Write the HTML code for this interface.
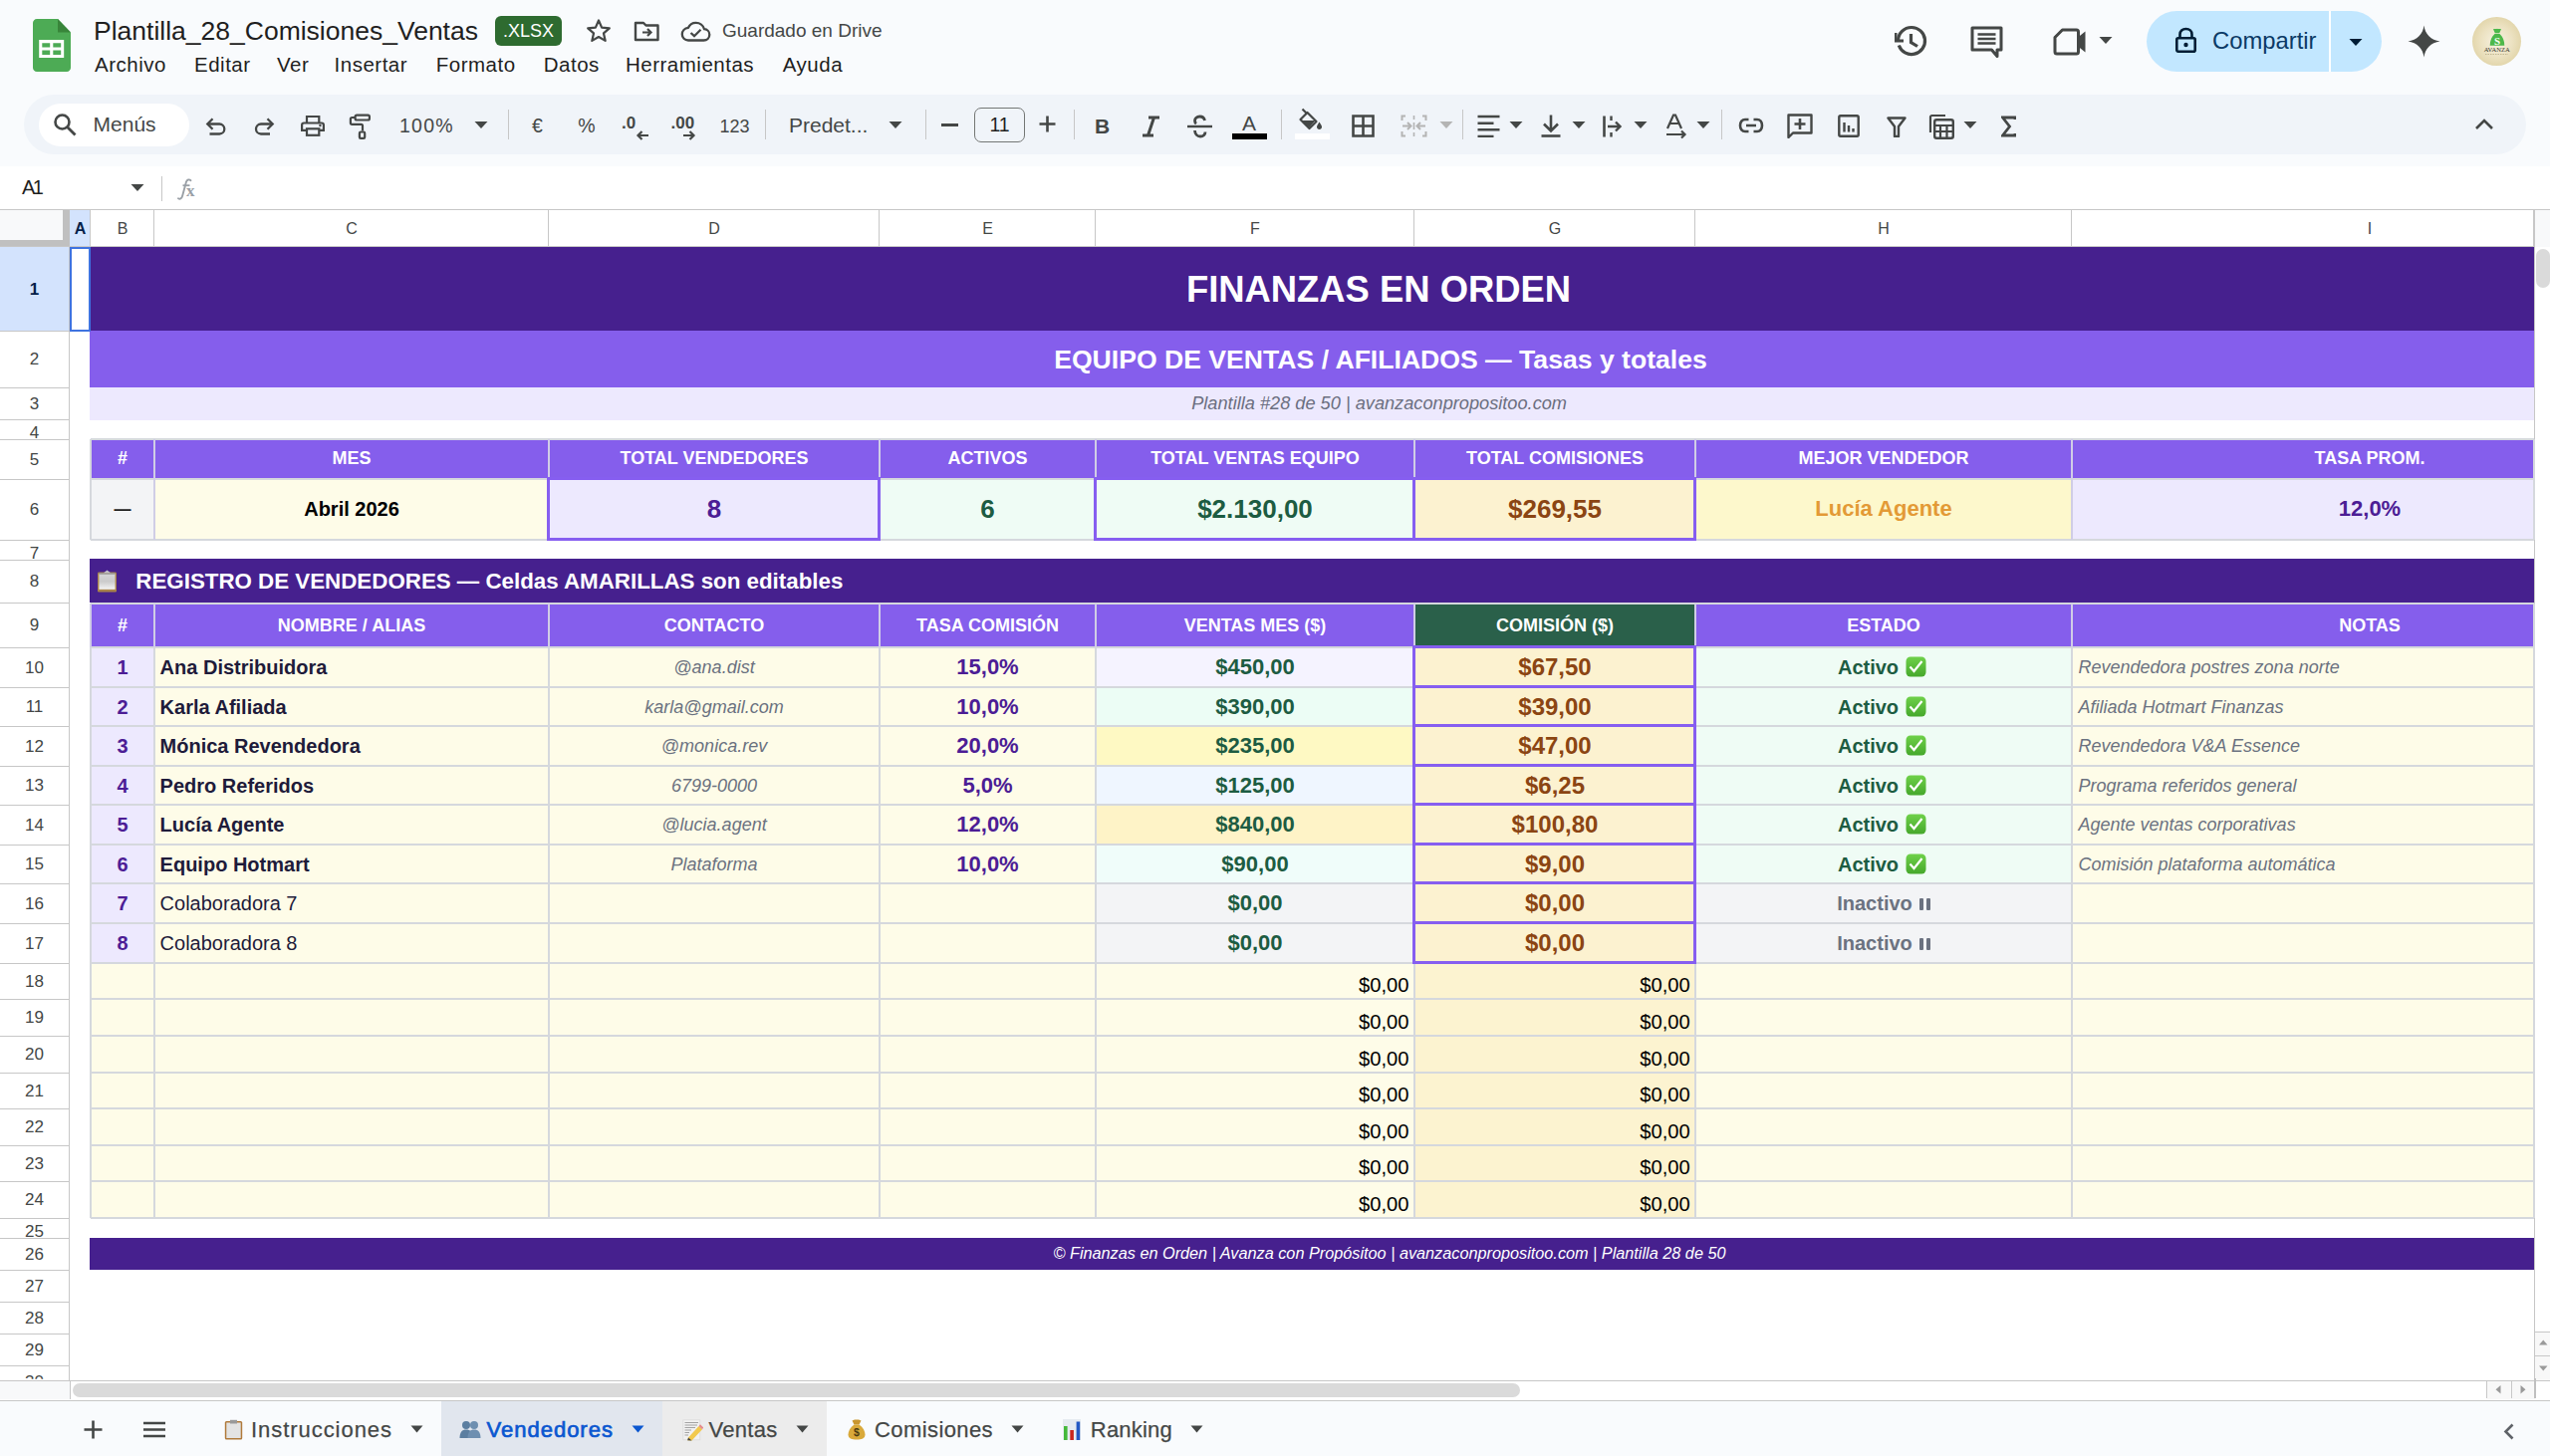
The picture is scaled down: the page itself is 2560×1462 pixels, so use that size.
<!DOCTYPE html><html><head><meta charset="utf-8"><style>
html,body{margin:0;padding:0;}body{width:2560px;height:1462px;overflow:hidden;position:relative;background:#f9fbfd;font-family:"Liberation Sans",sans-serif;}
.a{position:absolute;}.t{white-space:nowrap;}
</style></head><body>
<svg class="a" style="left:33px;top:19px;" width="38" height="53" viewBox="0 0 38 53"><path d="M4 0H25L38 13.5V49C38 51.2 36.2 53 34 53H4C1.8 53 0 51.2 0 49V4C0 1.8 1.8 0 4 0Z" fill="#4dab55"/><path d="M25 0L38 13.5H25Z" fill="#38853a"/><path d="M6.2 21H31.2V39H6.2Z" fill="#fff"/><path d="M9.3 24.2H17.2V28.6H9.3ZM20.3 24.2H28.2V28.6H20.3ZM9.3 31.5H17.2V36.1H9.3ZM20.3 31.5H28.2V36.1H20.3Z" fill="#4dab55"/></svg>
<div class="a t" style="left:94px;top:17.57px;font-size:26.5px;line-height:26.5px;color:#1f1f1f;font-weight:normal;font-style:normal;">Plantilla_28_Comisiones_Ventas</div>
<div class="a" style="left:497px;top:16px;width:67px;height:30px;background:#2e6b30;border-radius:6px;"></div>
<div class="a t" style="left:497.0px;width:67px;text-align:center;top:22.26px;font-size:18px;line-height:18px;color:#fff;font-weight:normal;font-style:normal;">.XLSX</div>
<svg class="a" style="left:588px;top:18px;" width="26" height="25" viewBox="0 0 26 25"><path d="M13 2.5L16.1 9.6L23.8 10.3L18 15.4L19.7 22.9L13 19L6.3 22.9L8 15.4L2.2 10.3L9.9 9.6Z" fill="none" stroke="#444746" stroke-width="2.2" stroke-linejoin="round"/></svg>
<svg class="a" style="left:636px;top:21px;" width="27" height="21" viewBox="0 0 27 21"><path d="M2 2H10L12.5 4.5H24.5V19H2Z" fill="none" stroke="#444746" stroke-width="2.4" stroke-linejoin="round"/><path d="M9 11.5H17M14 8L17.5 11.5L14 15" fill="none" stroke="#444746" stroke-width="2.2"/></svg>
<svg class="a" style="left:683px;top:21px;" width="31" height="21" viewBox="0 0 31 21"><path d="M8 19.5H23.5C26.8 19.5 29.3 17 29.3 13.8C29.3 10.8 27 8.4 24 8.2C23 4.4 19.6 1.8 15.6 1.8C12.2 1.8 9.3 3.8 8 6.8C4.4 7.2 1.8 10 1.8 13.5C1.8 16.8 4.5 19.5 8 19.5Z" fill="none" stroke="#444746" stroke-width="2.3"/><path d="M10.5 12L14 15.2L20.5 8.8" fill="none" stroke="#444746" stroke-width="2.3"/></svg>
<div class="a t" style="left:725px;top:21.12px;font-size:19px;line-height:19px;color:#444746;font-weight:normal;font-style:normal;">Guardado en Drive</div>
<div class="a t" style="left:95px;top:54.65px;font-size:20.5px;line-height:20.5px;color:#1f1f1f;font-weight:normal;font-style:normal;letter-spacing:0.5px;">Archivo</div>
<div class="a t" style="left:195px;top:54.65px;font-size:20.5px;line-height:20.5px;color:#1f1f1f;font-weight:normal;font-style:normal;letter-spacing:0.5px;">Editar</div>
<div class="a t" style="left:278px;top:54.65px;font-size:20.5px;line-height:20.5px;color:#1f1f1f;font-weight:normal;font-style:normal;letter-spacing:0.5px;">Ver</div>
<div class="a t" style="left:335.6px;top:54.65px;font-size:20.5px;line-height:20.5px;color:#1f1f1f;font-weight:normal;font-style:normal;letter-spacing:0.5px;">Insertar</div>
<div class="a t" style="left:437.8px;top:54.65px;font-size:20.5px;line-height:20.5px;color:#1f1f1f;font-weight:normal;font-style:normal;letter-spacing:0.5px;">Formato</div>
<div class="a t" style="left:545.8px;top:54.65px;font-size:20.5px;line-height:20.5px;color:#1f1f1f;font-weight:normal;font-style:normal;letter-spacing:0.5px;">Datos</div>
<div class="a t" style="left:628px;top:54.65px;font-size:20.5px;line-height:20.5px;color:#1f1f1f;font-weight:normal;font-style:normal;letter-spacing:0.5px;">Herramientas</div>
<div class="a t" style="left:785.8px;top:54.65px;font-size:20.5px;line-height:20.5px;color:#1f1f1f;font-weight:normal;font-style:normal;letter-spacing:0.5px;">Ayuda</div>
<svg class="a" style="left:1902px;top:24px;" width="34" height="34" viewBox="0 0 34 34"><path d="M17 3.5A13.5 13.5 0 1 1 4.3 21.5" fill="none" stroke="#444746" stroke-width="3.2"/><path d="M3.5 17A13.5 13.5 0 0 1 17 3.5" fill="none" stroke="#444746" stroke-width="3.2"/><path d="M1 9V17H9" fill="none" stroke="#444746" stroke-width="3"/><path d="M16.5 10V18.5L23 22.5" fill="none" stroke="#444746" stroke-width="3.2"/></svg>
<svg class="a" style="left:1978px;top:26px;" width="34" height="32" viewBox="0 0 34 32"><path d="M2 2H31V24H27V30.5L21.5 24H2Z" fill="none" stroke="#444746" stroke-width="3" stroke-linejoin="round"/><path d="M7.5 8.5H25.5M7.5 13H25.5M7.5 17.5H25.5" stroke="#444746" stroke-width="2.6"/></svg>
<svg class="a" style="left:2061px;top:28px;" width="34" height="28" viewBox="0 0 34 28"><path d="M9.5 2H23.5C24.6 2 25.5 2.9 25.5 4V24C25.5 25.1 24.6 26 23.5 26H4C2.9 26 2 25.1 2 24V9.5Z" fill="none" stroke="#444746" stroke-width="3" stroke-linejoin="round"/><path d="M25 9.5L32.5 3.5V24.5L25 18.5Z" fill="#444746"/></svg>
<svg class="a" style="left:2107px;top:36px;" width="14" height="9" viewBox="0 0 14 9"><path d="M0.5 1H13.5L7 8Z" fill="#444746"/></svg>
<div class="a" style="left:2155px;top:11px;width:236px;height:61px;background:#c2e7ff;border-radius:31px;"></div>
<div class="a" style="left:2338px;top:11px;width:2px;height:61px;background:#ffffff;"></div>
<svg class="a" style="left:2183px;top:27px;" width="23" height="27" viewBox="0 0 23 27"><path d="M5.5 11V7.5C5.5 4.2 8 2 11.5 2C15 2 17.5 4.2 17.5 7.5V11" fill="none" stroke="#001d35" stroke-width="2.6"/><rect x="2.3" y="11.3" width="18.4" height="13.4" rx="1.5" fill="none" stroke="#001d35" stroke-width="2.6"/><circle cx="11.5" cy="18" r="2.2" fill="#001d35"/></svg>
<div class="a t" style="left:2221px;top:28.65px;font-size:23.8px;line-height:23.8px;color:#0b3a66;font-weight:normal;font-style:normal;">Compartir</div>
<svg class="a" style="left:2358px;top:38px;" width="14" height="9" viewBox="0 0 14 9"><path d="M0.5 1H13.5L7 8Z" fill="#001d35"/></svg>
<svg class="a" style="left:2417px;top:25px;" width="33" height="33" viewBox="0 0 33 33"><path d="M16.5 0.5C17.5 9 23.5 15.5 32.5 16.5C23.5 17.5 17.5 24 16.5 32.5C15.5 24 9.5 17.5 0.5 16.5C9.5 15.5 15.5 9 16.5 0.5Z" fill="#444746"/></svg>
<div class="a" style="left:2482px;top:17px;width:49px;height:49px;border-radius:50%;background:radial-gradient(circle at 50% 50%,#f7f2e2 0%,#ece2c2 45%,#d8c994 100%);"></div>
<svg class="a" style="left:2482px;top:17px;" width="49" height="49" viewBox="0 0 49 49"><path d="M21 12.3C22.5 11.5 24 12.5 25 11.8C26 12.5 27.5 11.5 29 12.3L27.2 16.3H22.8Z" fill="#4cb84a"/><path d="M22.5 17H27.5C30.5 19.5 32.3 24 32.3 28.8H17.7C17.7 24 19.5 19.5 22.5 17Z" fill="#4cb84a"/><text x="25" y="27.5" font-size="11" font-family="Liberation Serif" font-weight="bold" fill="#f4fff0" text-anchor="middle">S</text><text x="24.7" y="35.3" font-size="6.6" font-family="Liberation Serif" fill="#3a3a30" text-anchor="middle" textLength="26" lengthAdjust="spacingAndGlyphs">AVANZA</text><path d="M13 37.5H36" stroke="#b9ad86" stroke-width="0.8" stroke-dasharray="1.5 1"/></svg>
<div class="a" style="left:24px;top:95px;width:2512px;height:60px;background:#f0f4f9;border-radius:30px;"></div>
<div class="a" style="left:39px;top:104px;width:151px;height:43px;background:#ffffff;border-radius:22px;"></div>
<svg class="a" style="left:53px;top:113px;" width="25" height="25" viewBox="0 0 25 25"><circle cx="9.5" cy="9.5" r="7" fill="none" stroke="#444746" stroke-width="2.6"/><path d="M14.5 14.5L22.5 22.5" stroke="#444746" stroke-width="2.8"/></svg>
<div class="a t" style="left:93.6px;top:114.02px;font-size:21px;line-height:21px;color:#444746;font-weight:normal;font-style:normal;">Menús</div>
<svg class="a" style="left:205px;top:117px;" width="23" height="20" viewBox="0 0 23 20"><path d="M8.5 2.3L3.3 7.5L8.5 12.7" fill="none" stroke="#444746" stroke-width="2.3"/><path d="M3.5 7.5H15.3A5 5 0 0 1 15.3 17.5H5.5" fill="none" stroke="#444746" stroke-width="2.3"/></svg>
<svg class="a" style="left:254px;top:117px;" width="23" height="20" viewBox="0 0 23 20"><path d="M14.5 2.3L19.7 7.5L14.5 12.7" fill="none" stroke="#444746" stroke-width="2.3"/><path d="M19.5 7.5H8A5 5 0 0 0 8 17.5H17" fill="none" stroke="#444746" stroke-width="2.3"/></svg>
<svg class="a" style="left:301px;top:113px;" width="27" height="26" viewBox="0 0 27 26"><path d="M7 10.5V4H19.3V10.5" fill="none" stroke="#444746" stroke-width="2.2"/><path d="M7 17.9H2.1V12.5C2.1 11.4 3 10.5 4.1 10.5H21.9C23 10.5 23.9 11.4 23.9 12.5V17.9H19.3" fill="none" stroke="#444746" stroke-width="2.2"/><rect x="7" y="16.3" width="12.3" height="6.5" fill="none" stroke="#444746" stroke-width="2.2"/><circle cx="20.4" cy="13" r="1.2" fill="#444746"/></svg>
<svg class="a" style="left:349px;top:113px;" width="25" height="28" viewBox="0 0 25 28"><rect x="7.6" y="2.6" width="14.3" height="4.9" rx="1.5" fill="none" stroke="#444746" stroke-width="2.2"/><path d="M7.6 5H4.4C3.6 5 2.9 5.7 2.9 6.5V10.3C2.9 11.1 3.6 11.8 4.4 11.8H13.5C14.3 11.8 15 12.5 15 13.3V18.4" fill="none" stroke="#444746" stroke-width="2.2"/><rect x="11.9" y="19.5" width="5.3" height="6.4" rx="1.2" fill="none" stroke="#444746" stroke-width="2.2"/></svg>
<div class="a t" style="left:401px;top:117.49px;font-size:19.5px;line-height:19.5px;color:#444746;font-weight:normal;font-style:normal;letter-spacing:1.25px;">100%</div>
<svg class="a" style="left:476px;top:121px;" width="14" height="9" viewBox="0 0 14 9"><path d="M0.5 1H13.5L7 8Z" fill="#444746"/></svg>
<div class="a" style="left:510px;top:110px;width:1px;height:30px;background:#c7c7c7;"></div>
<div class="a" style="left:768px;top:110px;width:1px;height:30px;background:#c7c7c7;"></div>
<div class="a" style="left:929px;top:110px;width:1px;height:30px;background:#c7c7c7;"></div>
<div class="a" style="left:1078px;top:110px;width:1px;height:30px;background:#c7c7c7;"></div>
<div class="a" style="left:1286px;top:110px;width:1px;height:30px;background:#c7c7c7;"></div>
<div class="a" style="left:1468px;top:110px;width:1px;height:30px;background:#c7c7c7;"></div>
<div class="a" style="left:1728px;top:110px;width:1px;height:30px;background:#c7c7c7;"></div>
<div class="a t" style="left:524.5px;width:30px;text-align:center;top:116.99px;font-size:19.5px;line-height:19.5px;color:#444746;font-weight:normal;font-style:normal;">€</div>
<div class="a t" style="left:574.0px;width:30px;text-align:center;top:116.99px;font-size:19.5px;line-height:19.5px;color:#444746;font-weight:normal;font-style:normal;">%</div>
<div class="a t" style="left:624px;top:114.61px;font-size:17px;line-height:17px;color:#444746;font-weight:bold;font-style:normal;">.0</div>
<svg class="a" style="left:638px;top:131px;" width="14" height="10" viewBox="0 0 14 10"><path d="M13 5H3M6.5 1L2.5 5L6.5 9" fill="none" stroke="#444746" stroke-width="2.2"/></svg>
<div class="a t" style="left:673.5px;top:114.61px;font-size:17px;line-height:17px;color:#444746;font-weight:bold;font-style:normal;">.00</div>
<svg class="a" style="left:685px;top:131px;" width="14" height="10" viewBox="0 0 14 10"><path d="M1 5H11M7.5 1L11.5 5L7.5 9" fill="none" stroke="#444746" stroke-width="2.2"/></svg>
<div class="a t" style="left:722.5px;top:118.26px;font-size:18px;line-height:18px;color:#444746;font-weight:normal;font-style:normal;">123</div>
<div class="a t" style="left:792px;top:114.72px;font-size:21px;line-height:21px;color:#444746;font-weight:normal;font-style:normal;">Predet...</div>
<svg class="a" style="left:892px;top:121px;" width="14" height="9" viewBox="0 0 14 9"><path d="M0.5 1H13.5L7 8Z" fill="#444746"/></svg>
<div class="a" style="left:945px;top:124px;width:17px;height:2.5px;background:#444746;"></div>
<div class="a" style="left:978px;top:107.5px;width:51px;height:35.0px;box-sizing:border-box;border:1.6px solid #747775;border-radius:7px;"></div>
<div class="a t" style="left:978.5px;width:50px;text-align:center;top:115.99px;font-size:19.5px;line-height:19.5px;color:#1f1f1f;font-weight:normal;font-style:normal;">11</div>
<svg class="a" style="left:1043px;top:116px;" width="17" height="17" viewBox="0 0 17 17"><path d="M8.5 0.5V16.5M0.5 8.5H16.5" stroke="#444746" stroke-width="2.6"/></svg>
<div class="a t" style="left:1099px;top:116.22px;font-size:21px;line-height:21px;color:#444746;font-weight:bold;font-style:normal;">B</div>
<svg class="a" style="left:1146px;top:116px;" width="19" height="22" viewBox="0 0 19 22"><path d="M7 2H18M1 20H12M12.5 2L6.5 20" fill="none" stroke="#444746" stroke-width="3"/></svg>
<svg class="a" style="left:1191px;top:114px;" width="27" height="26" viewBox="0 0 27 26"><path d="M1 13H26" stroke="#444746" stroke-width="2.4"/><path d="M18.5 7C18 4.5 16 3 13.5 3C10.5 3 8.5 4.8 8.5 7.3C8.5 8.5 9 9.5 10 10.2" fill="none" stroke="#444746" stroke-width="2.8"/><path d="M8.5 17C8.7 20.5 11 23 14 23C17 23 19 21 19 18.5" fill="none" stroke="#444746" stroke-width="2.8"/></svg>
<div class="a t" style="left:1239.0px;width:30px;text-align:center;top:112.72px;font-size:21px;line-height:21px;color:#444746;font-weight:normal;font-style:normal;">A</div>
<div class="a" style="left:1237px;top:134px;width:35px;height:6px;background:#000000;"></div>
<svg class="a" style="left:1303px;top:108px;" width="26" height="24" viewBox="0 0 26 24"><path d="M4.5 1.5L9 6" stroke="#444746" stroke-width="2.2"/><path d="M9.5 5L18.5 14L11.5 21L2.5 12Z" fill="none" stroke="#444746" stroke-width="2.2" stroke-linejoin="round"/><path d="M3.5 13H17.5L11.5 20Z" fill="#444746"/><path d="M21.5 14.5C21.5 14.5 19 18 19 19.5C19 20.9 20.1 22 21.5 22C22.9 22 24 20.9 24 19.5C24 18 21.5 14.5 21.5 14.5Z" fill="#444746"/></svg>
<div class="a" style="left:1300px;top:134px;width:35px;height:6px;background:#ffffff;"></div>
<svg class="a" style="left:1357px;top:115px;" width="23" height="23" viewBox="0 0 23 23"><path d="M1.5 1.5H21.5V21.5H1.5ZM11.5 1.5V21.5M1.5 11.5H21.5" fill="none" stroke="#444746" stroke-width="2.6"/></svg>
<svg class="a" style="left:1406px;top:115px;" width="27" height="23" viewBox="0 0 27 23"><path d="M5 1.5H1.5V6M5 21.5H1.5V17M22 1.5H25.5V6M22 21.5H25.5V17" fill="none" stroke="#b4b4b4" stroke-width="2"/><path d="M2 11.5H10M7 8L10.5 11.5L7 15M25 11.5H17M20 8L16.5 11.5L20 15" fill="none" stroke="#b4b4b4" stroke-width="2"/><path d="M13.5 1V5M13.5 8V15M13.5 18V22" stroke="#b4b4b4" stroke-width="1.6"/></svg>
<svg class="a" style="left:1445px;top:121px;" width="14" height="9" viewBox="0 0 14 9"><path d="M0.5 1H13.5L7 8Z" fill="#b4b4b4"/></svg>
<svg class="a" style="left:1483px;top:115px;" width="23" height="23" viewBox="0 0 23 23"><path d="M0.5 2H22.5M0.5 8.7H16.5M0.5 15.3H22.5M0.5 22H16.5" stroke="#444746" stroke-width="2.6"/></svg>
<svg class="a" style="left:1515px;top:121px;" width="14" height="9" viewBox="0 0 14 9"><path d="M0.5 1H13.5L7 8Z" fill="#444746"/></svg>
<svg class="a" style="left:1547px;top:115px;" width="20" height="23" viewBox="0 0 20 23"><path d="M10 0.5V16M3 9.5L10 16.5L17 9.5" fill="none" stroke="#444746" stroke-width="2.6"/><path d="M0.5 21.5H19.5" stroke="#444746" stroke-width="2.6"/></svg>
<svg class="a" style="left:1578px;top:121px;" width="14" height="9" viewBox="0 0 14 9"><path d="M0.5 1H13.5L7 8Z" fill="#444746"/></svg>
<svg class="a" style="left:1609px;top:116px;" width="20" height="22" viewBox="0 0 20 22"><path d="M1.5 0.5V21.5" stroke="#444746" stroke-width="2.6"/><path d="M8.5 0.5V5M8.5 17V21.5" stroke="#444746" stroke-width="2.4"/><path d="M5 11H17M13 6.5L17.5 11L13 15.5" fill="none" stroke="#444746" stroke-width="2.4"/></svg>
<svg class="a" style="left:1640px;top:121px;" width="14" height="9" viewBox="0 0 14 9"><path d="M0.5 1H13.5L7 8Z" fill="#444746"/></svg>
<svg class="a" style="left:1672px;top:114px;" width="22" height="26" viewBox="0 0 22 26"><path d="M2 15L8 1.5H10L16 15M4.5 10H13.5" fill="none" stroke="#444746" stroke-width="2.2"/><path d="M1 21H19M16 17.5L19.5 21L16 24.5" fill="none" stroke="#444746" stroke-width="2.2"/></svg>
<svg class="a" style="left:1703px;top:121px;" width="14" height="9" viewBox="0 0 14 9"><path d="M0.5 1H13.5L7 8Z" fill="#444746"/></svg>
<svg class="a" style="left:1745px;top:118px;" width="26" height="16" viewBox="0 0 26 16"><path d="M10.5 2H7C4 2 2 4.5 2 8C2 11.5 4 14 7 14H10.5M15.5 2H19C22 2 24 4.5 24 8C24 11.5 22 14 19 14H15.5M8 8H18" fill="none" stroke="#444746" stroke-width="2.6"/></svg>
<svg class="a" style="left:1794px;top:114px;" width="26" height="25" viewBox="0 0 26 25"><path d="M1.5 1.5H24.5V19.5H6L1.5 24Z" fill="none" stroke="#444746" stroke-width="2.4" stroke-linejoin="round"/><path d="M13 5V16M7.5 10.5H18.5" stroke="#444746" stroke-width="2.6"/></svg>
<svg class="a" style="left:1845px;top:115px;" width="22" height="23" viewBox="0 0 22 23"><rect x="1.3" y="1.3" width="19.4" height="20.4" rx="1.5" fill="none" stroke="#444746" stroke-width="2.4"/><path d="M6.5 8V17.5M11 11V17.5M15.5 14V17.5" stroke="#444746" stroke-width="2.4"/></svg>
<svg class="a" style="left:1894px;top:117px;" width="20" height="21" viewBox="0 0 20 21"><path d="M1.5 1.5H18.5L12 10V20H8V10Z" fill="none" stroke="#444746" stroke-width="2.4" stroke-linejoin="round"/></svg>
<svg class="a" style="left:1936px;top:114px;" width="26" height="26" viewBox="0 0 26 26"><path d="M2 19V3.5C2 2.7 2.7 2 3.5 2H17" fill="none" stroke="#444746" stroke-width="2.2"/><rect x="6.2" y="6.2" width="18.6" height="18.6" rx="2" fill="none" stroke="#444746" stroke-width="2.4"/><path d="M6 12H25M6 18H25M12 12V25M18.5 12V25" stroke="#444746" stroke-width="2.2"/></svg>
<svg class="a" style="left:1971px;top:121px;" width="14" height="9" viewBox="0 0 14 9"><path d="M0.5 1H13.5L7 8Z" fill="#444746"/></svg>
<svg class="a" style="left:2009px;top:116px;" width="15" height="22" viewBox="0 0 15 22"><path d="M14 4V2H1.5L8.5 11L1.5 20H14V18" fill="none" stroke="#444746" stroke-width="2.8" stroke-linejoin="miter"/></svg>
<svg class="a" style="left:2484px;top:118px;" width="20" height="13" viewBox="0 0 20 13"><path d="M2 11L10 3L18 11" fill="none" stroke="#444746" stroke-width="2.6"/></svg>
<div class="a" style="left:0px;top:167px;width:2560px;height:44px;background:#ffffff;"></div>
<div class="a t" style="left:22px;top:178.27px;font-size:20px;line-height:20px;color:#1f1f1f;font-weight:normal;font-style:normal;letter-spacing:-2.5px;">A1</div>
<svg class="a" style="left:131px;top:184px;" width="14" height="9" viewBox="0 0 14 9"><path d="M0.5 1H13.5L7 8Z" fill="#444746"/></svg>
<div class="a" style="left:162px;top:177px;width:1px;height:25px;background:#c7c7c7;"></div>
<svg class="a" style="left:176px;top:178px;" width="28" height="26" viewBox="0 0 28 26"><path d="M15.5 3.2C14 1.8 11.8 2.3 11 4.5L7.2 18.5C6.5 21 5 22.5 3 21.3" fill="none" stroke="#9aa0a6" stroke-width="1.9" stroke-linecap="round"/><path d="M7.5 8.2H14.5" stroke="#9aa0a6" stroke-width="1.8"/><text x="11" y="19.3" font-size="17" font-family="Liberation Serif" fill="#9aa0a6" font-weight="bold">x</text></svg>
<div class="a" style="left:0px;top:210px;width:2560px;height:1px;background:#c7c7c7;"></div>
<div class="a" style="left:70px;top:248px;width:2474px;height:1138px;background:#ffffff;"></div>
<div class="a" style="left:0px;top:211px;width:2560px;height:37px;background:#ffffff;"></div>
<div class="a" style="left:0px;top:211px;width:63px;height:30px;background:#f8f9fa;"></div>
<div class="a" style="left:63px;top:211px;width:7px;height:37px;background:#c0c0c0;"></div>
<div class="a" style="left:0px;top:241px;width:70px;height:7px;background:#c0c0c0;"></div>
<div class="a" style="left:70px;top:211px;width:21px;height:37px;background:#d3e3fd;"></div>
<div class="a" style="left:90px;top:211px;width:1px;height:37px;background:#c7c7c7;"></div>
<div class="a t" style="left:60.5px;width:40px;text-align:center;top:221.96px;font-size:16px;line-height:16px;color:#041e49;font-weight:bold;font-style:normal;">A</div>
<div class="a" style="left:154px;top:211px;width:1px;height:37px;background:#c7c7c7;"></div>
<div class="a t" style="left:103.0px;width:40px;text-align:center;top:221.96px;font-size:16px;line-height:16px;color:#444746;font-weight:normal;font-style:normal;">B</div>
<div class="a" style="left:550px;top:211px;width:1px;height:37px;background:#c7c7c7;"></div>
<div class="a t" style="left:333.0px;width:40px;text-align:center;top:221.96px;font-size:16px;line-height:16px;color:#444746;font-weight:normal;font-style:normal;">C</div>
<div class="a" style="left:882px;top:211px;width:1px;height:37px;background:#c7c7c7;"></div>
<div class="a t" style="left:697.0px;width:40px;text-align:center;top:221.96px;font-size:16px;line-height:16px;color:#444746;font-weight:normal;font-style:normal;">D</div>
<div class="a" style="left:1099px;top:211px;width:1px;height:37px;background:#c7c7c7;"></div>
<div class="a t" style="left:971.5px;width:40px;text-align:center;top:221.96px;font-size:16px;line-height:16px;color:#444746;font-weight:normal;font-style:normal;">E</div>
<div class="a" style="left:1419px;top:211px;width:1px;height:37px;background:#c7c7c7;"></div>
<div class="a t" style="left:1240.0px;width:40px;text-align:center;top:221.96px;font-size:16px;line-height:16px;color:#444746;font-weight:normal;font-style:normal;">F</div>
<div class="a" style="left:1701px;top:211px;width:1px;height:37px;background:#c7c7c7;"></div>
<div class="a t" style="left:1541.0px;width:40px;text-align:center;top:221.96px;font-size:16px;line-height:16px;color:#444746;font-weight:normal;font-style:normal;">G</div>
<div class="a" style="left:2079px;top:211px;width:1px;height:37px;background:#c7c7c7;"></div>
<div class="a t" style="left:1871.0px;width:40px;text-align:center;top:221.96px;font-size:16px;line-height:16px;color:#444746;font-weight:normal;font-style:normal;">H</div>
<div class="a" style="left:2543px;top:211px;width:1px;height:37px;background:#c7c7c7;"></div>
<div class="a t" style="left:2359.0px;width:40px;text-align:center;top:221.96px;font-size:16px;line-height:16px;color:#444746;font-weight:normal;font-style:normal;">I</div>
<div class="a" style="left:0px;top:247px;width:2544px;height:1px;background:#c7c7c7;"></div>
<div class="a" style="left:2544px;top:211px;width:16px;height:37px;background:#f8f9fa;"></div>
<div class="a" style="left:2544px;top:211px;width:1px;height:1175px;background:#c7c7c7;"></div>
<div class="a" style="left:0px;top:248px;width:69px;height:1138px;background:#ffffff;"></div>
<div class="a" style="left:0px;top:248px;width:69px;height:84px;background:#d3e3fd;"></div>
<div class="a" style="left:69px;top:248px;width:1px;height:1138px;background:#c7c7c7;"></div>
<div class="a" style="left:0px;top:332px;width:69px;height:1px;background:#c7c7c7;"></div>
<div class="a t" style="left:4.5px;width:60px;text-align:center;top:281.81px;font-size:17px;line-height:17px;color:#041e49;font-weight:bold;font-style:normal;">1</div>
<div class="a" style="left:0px;top:389px;width:69px;height:1px;background:#c7c7c7;"></div>
<div class="a t" style="left:4.5px;width:60px;text-align:center;top:352.31px;font-size:17px;line-height:17px;color:#444746;font-weight:normal;font-style:normal;">2</div>
<div class="a" style="left:0px;top:421px;width:69px;height:1px;background:#c7c7c7;"></div>
<div class="a t" style="left:4.5px;width:60px;text-align:center;top:396.81px;font-size:17px;line-height:17px;color:#444746;font-weight:normal;font-style:normal;">3</div>
<div class="a" style="left:0px;top:441px;width:69px;height:1px;background:#c7c7c7;"></div>
<div class="a t" style="left:4.5px;width:60px;text-align:center;top:426.11px;font-size:17px;line-height:17px;color:#444746;font-weight:normal;font-style:normal;">4</div>
<div class="a" style="left:0px;top:481px;width:69px;height:1px;background:#c7c7c7;"></div>
<div class="a t" style="left:4.5px;width:60px;text-align:center;top:452.81px;font-size:17px;line-height:17px;color:#444746;font-weight:normal;font-style:normal;">5</div>
<div class="a" style="left:0px;top:542px;width:69px;height:1px;background:#c7c7c7;"></div>
<div class="a t" style="left:4.5px;width:60px;text-align:center;top:503.31px;font-size:17px;line-height:17px;color:#444746;font-weight:normal;font-style:normal;">6</div>
<div class="a" style="left:0px;top:562px;width:69px;height:1px;background:#c7c7c7;"></div>
<div class="a t" style="left:4.5px;width:60px;text-align:center;top:547.11px;font-size:17px;line-height:17px;color:#444746;font-weight:normal;font-style:normal;">7</div>
<div class="a" style="left:0px;top:605px;width:69px;height:1px;background:#c7c7c7;"></div>
<div class="a t" style="left:4.5px;width:60px;text-align:center;top:575.31px;font-size:17px;line-height:17px;color:#444746;font-weight:normal;font-style:normal;">8</div>
<div class="a" style="left:0px;top:650px;width:69px;height:1px;background:#c7c7c7;"></div>
<div class="a t" style="left:4.5px;width:60px;text-align:center;top:619.31px;font-size:17px;line-height:17px;color:#444746;font-weight:normal;font-style:normal;">9</div>
<div class="a" style="left:0px;top:690px;width:69px;height:1px;background:#c7c7c7;"></div>
<div class="a t" style="left:4.5px;width:60px;text-align:center;top:661.81px;font-size:17px;line-height:17px;color:#444746;font-weight:normal;font-style:normal;">10</div>
<div class="a" style="left:0px;top:729px;width:69px;height:1px;background:#c7c7c7;"></div>
<div class="a t" style="left:4.5px;width:60px;text-align:center;top:701.31px;font-size:17px;line-height:17px;color:#444746;font-weight:normal;font-style:normal;">11</div>
<div class="a" style="left:0px;top:769px;width:69px;height:1px;background:#c7c7c7;"></div>
<div class="a t" style="left:4.5px;width:60px;text-align:center;top:740.81px;font-size:17px;line-height:17px;color:#444746;font-weight:normal;font-style:normal;">12</div>
<div class="a" style="left:0px;top:808px;width:69px;height:1px;background:#c7c7c7;"></div>
<div class="a t" style="left:4.5px;width:60px;text-align:center;top:780.31px;font-size:17px;line-height:17px;color:#444746;font-weight:normal;font-style:normal;">13</div>
<div class="a" style="left:0px;top:848px;width:69px;height:1px;background:#c7c7c7;"></div>
<div class="a t" style="left:4.5px;width:60px;text-align:center;top:819.81px;font-size:17px;line-height:17px;color:#444746;font-weight:normal;font-style:normal;">14</div>
<div class="a" style="left:0px;top:887px;width:69px;height:1px;background:#c7c7c7;"></div>
<div class="a t" style="left:4.5px;width:60px;text-align:center;top:859.31px;font-size:17px;line-height:17px;color:#444746;font-weight:normal;font-style:normal;">15</div>
<div class="a" style="left:0px;top:927px;width:69px;height:1px;background:#c7c7c7;"></div>
<div class="a t" style="left:4.5px;width:60px;text-align:center;top:898.81px;font-size:17px;line-height:17px;color:#444746;font-weight:normal;font-style:normal;">16</div>
<div class="a" style="left:0px;top:967px;width:69px;height:1px;background:#c7c7c7;"></div>
<div class="a t" style="left:4.5px;width:60px;text-align:center;top:938.81px;font-size:17px;line-height:17px;color:#444746;font-weight:normal;font-style:normal;">17</div>
<div class="a" style="left:0px;top:1003px;width:69px;height:1px;background:#c7c7c7;"></div>
<div class="a t" style="left:4.5px;width:60px;text-align:center;top:976.81px;font-size:17px;line-height:17px;color:#444746;font-weight:normal;font-style:normal;">18</div>
<div class="a" style="left:0px;top:1040px;width:69px;height:1px;background:#c7c7c7;"></div>
<div class="a t" style="left:4.5px;width:60px;text-align:center;top:1013.31px;font-size:17px;line-height:17px;color:#444746;font-weight:normal;font-style:normal;">19</div>
<div class="a" style="left:0px;top:1077px;width:69px;height:1px;background:#c7c7c7;"></div>
<div class="a t" style="left:4.5px;width:60px;text-align:center;top:1050.31px;font-size:17px;line-height:17px;color:#444746;font-weight:normal;font-style:normal;">20</div>
<div class="a" style="left:0px;top:1113px;width:69px;height:1px;background:#c7c7c7;"></div>
<div class="a t" style="left:4.5px;width:60px;text-align:center;top:1086.81px;font-size:17px;line-height:17px;color:#444746;font-weight:normal;font-style:normal;">21</div>
<div class="a" style="left:0px;top:1150px;width:69px;height:1px;background:#c7c7c7;"></div>
<div class="a t" style="left:4.5px;width:60px;text-align:center;top:1123.31px;font-size:17px;line-height:17px;color:#444746;font-weight:normal;font-style:normal;">22</div>
<div class="a" style="left:0px;top:1186px;width:69px;height:1px;background:#c7c7c7;"></div>
<div class="a t" style="left:4.5px;width:60px;text-align:center;top:1159.81px;font-size:17px;line-height:17px;color:#444746;font-weight:normal;font-style:normal;">23</div>
<div class="a" style="left:0px;top:1223px;width:69px;height:1px;background:#c7c7c7;"></div>
<div class="a t" style="left:4.5px;width:60px;text-align:center;top:1196.31px;font-size:17px;line-height:17px;color:#444746;font-weight:normal;font-style:normal;">24</div>
<div class="a" style="left:0px;top:1243px;width:69px;height:1px;background:#c7c7c7;"></div>
<div class="a t" style="left:4.5px;width:60px;text-align:center;top:1228.11px;font-size:17px;line-height:17px;color:#444746;font-weight:normal;font-style:normal;">25</div>
<div class="a" style="left:0px;top:1275px;width:69px;height:1px;background:#c7c7c7;"></div>
<div class="a t" style="left:4.5px;width:60px;text-align:center;top:1250.81px;font-size:17px;line-height:17px;color:#444746;font-weight:normal;font-style:normal;">26</div>
<div class="a" style="left:0px;top:1307px;width:69px;height:1px;background:#c7c7c7;"></div>
<div class="a t" style="left:4.5px;width:60px;text-align:center;top:1282.81px;font-size:17px;line-height:17px;color:#444746;font-weight:normal;font-style:normal;">27</div>
<div class="a" style="left:0px;top:1339px;width:69px;height:1px;background:#c7c7c7;"></div>
<div class="a t" style="left:4.5px;width:60px;text-align:center;top:1314.81px;font-size:17px;line-height:17px;color:#444746;font-weight:normal;font-style:normal;">28</div>
<div class="a" style="left:0px;top:1371px;width:69px;height:1px;background:#c7c7c7;"></div>
<div class="a t" style="left:4.5px;width:60px;text-align:center;top:1346.81px;font-size:17px;line-height:17px;color:#444746;font-weight:normal;font-style:normal;">29</div>
<div class="a" style="left:0px;top:1403px;width:69px;height:1px;background:#c7c7c7;"></div>
<div class="a t" style="left:4.5px;width:60px;text-align:center;top:1378.81px;font-size:17px;line-height:17px;color:#444746;font-weight:normal;font-style:normal;clip-path:inset(0 0 11px 0);">30</div>
<div class="a" style="left:90px;top:248px;width:2454px;height:84px;background:#46208e;"></div>
<div class="a" style="left:90px;top:332px;width:2454px;height:57px;background:#855eec;"></div>
<div class="a" style="left:90px;top:389px;width:2454px;height:33px;background:#ede9fe;"></div>
<div class="a t" style="left:784.0px;width:1200px;text-align:center;top:273.19px;font-size:36.4px;line-height:36.4px;color:#ffffff;font-weight:bold;font-style:normal;">FINANZAS EN ORDEN</div>
<div class="a t" style="left:786.0px;width:1200px;text-align:center;top:348.28px;font-size:26.6px;line-height:26.6px;color:#ffffff;font-weight:bold;font-style:normal;">EQUIPO DE VENTAS / AFILIADOS — Tasas y totales</div>
<div class="a t" style="left:784.5999999999999px;width:1200px;text-align:center;top:395.89px;font-size:18.2px;line-height:18.2px;color:#6b6f80;font-weight:normal;font-style:italic;">Plantilla #28 de 50 | avanzaconpropositoo.com</div>
<div class="a" style="left:70px;top:248px;width:21px;height:85px;box-sizing:border-box;border:2px solid #3f73e0;"></div>
<div class="a" style="left:91px;top:441px;width:2453px;height:40px;background:#855eec;"></div>
<div class="a t" style="left:-177.0px;width:600px;text-align:center;top:451.46px;font-size:18px;line-height:18px;color:#ffffff;font-weight:bold;font-style:normal;">#</div>
<div class="a t" style="left:53.0px;width:600px;text-align:center;top:451.46px;font-size:18px;line-height:18px;color:#ffffff;font-weight:bold;font-style:normal;">MES</div>
<div class="a t" style="left:417.0px;width:600px;text-align:center;top:451.46px;font-size:18px;line-height:18px;color:#ffffff;font-weight:bold;font-style:normal;">TOTAL VENDEDORES</div>
<div class="a t" style="left:691.5px;width:600px;text-align:center;top:451.46px;font-size:18px;line-height:18px;color:#ffffff;font-weight:bold;font-style:normal;">ACTIVOS</div>
<div class="a t" style="left:960.0px;width:600px;text-align:center;top:451.46px;font-size:18px;line-height:18px;color:#ffffff;font-weight:bold;font-style:normal;">TOTAL VENTAS EQUIPO</div>
<div class="a t" style="left:1261.0px;width:600px;text-align:center;top:451.46px;font-size:18px;line-height:18px;color:#ffffff;font-weight:bold;font-style:normal;">TOTAL COMISIONES</div>
<div class="a t" style="left:1591.0px;width:600px;text-align:center;top:451.46px;font-size:18px;line-height:18px;color:#ffffff;font-weight:bold;font-style:normal;">MEJOR VENDEDOR</div>
<div class="a t" style="left:2079.0px;width:600px;text-align:center;top:451.46px;font-size:18px;line-height:18px;color:#ffffff;font-weight:bold;font-style:normal;">TASA PROM.</div>
<div class="a" style="left:91px;top:481px;width:64px;height:61px;background:#f3f4f6;"></div>
<div class="a" style="left:155px;top:481px;width:396px;height:61px;background:#fefce8;"></div>
<div class="a" style="left:551px;top:481px;width:332px;height:61px;background:#ede9fe;"></div>
<div class="a" style="left:883px;top:481px;width:217px;height:61px;background:#effcf5;"></div>
<div class="a" style="left:1100px;top:481px;width:320px;height:61px;background:#effcf5;"></div>
<div class="a" style="left:1420px;top:481px;width:282px;height:61px;background:#fcf2d0;"></div>
<div class="a" style="left:1702px;top:481px;width:378px;height:61px;background:#fdf8cc;"></div>
<div class="a" style="left:2080px;top:481px;width:464px;height:61px;background:#ede9fe;"></div>
<div class="a t" style="left:-177.0px;width:600px;text-align:center;top:502.70px;font-size:17px;line-height:17px;color:#1f1f1f;font-weight:bold;font-style:normal;">—</div>
<div class="a t" style="left:53.0px;width:600px;text-align:center;top:501.23px;font-size:20px;line-height:20px;color:#000000;font-weight:bold;font-style:normal;">Abril 2026</div>
<div class="a t" style="left:417.0px;width:600px;text-align:center;top:498.30px;font-size:26px;line-height:26px;color:#4c1d95;font-weight:bold;font-style:normal;">8</div>
<div class="a t" style="left:691.5px;width:600px;text-align:center;top:498.30px;font-size:26px;line-height:26px;color:#1d5c42;font-weight:bold;font-style:normal;">6</div>
<div class="a t" style="left:960.0px;width:600px;text-align:center;top:498.30px;font-size:26px;line-height:26px;color:#1d5c42;font-weight:bold;font-style:normal;">$2.130,00</div>
<div class="a t" style="left:1261.0px;width:600px;text-align:center;top:498.30px;font-size:26px;line-height:26px;color:#8b4513;font-weight:bold;font-style:normal;">$269,55</div>
<div class="a t" style="left:1591.0px;width:600px;text-align:center;top:500.25px;font-size:22px;line-height:22px;color:#e39a36;font-weight:bold;font-style:normal;">Lucía Agente</div>
<div class="a t" style="left:2079.0px;width:600px;text-align:center;top:500.25px;font-size:22px;line-height:22px;color:#4c1d95;font-weight:bold;font-style:normal;">12,0%</div>
<div class="a" style="left:91px;top:440px;width:2453px;height:2px;background:#d5d8dd;"></div>
<div class="a" style="left:91px;top:480px;width:2453px;height:2px;background:#d5d8dd;"></div>
<div class="a" style="left:91px;top:541px;width:2453px;height:2px;background:#d5d8dd;"></div>
<div class="a" style="left:90px;top:441px;width:2px;height:101px;background:#d0cde6;"></div>
<div class="a" style="left:154px;top:441px;width:2px;height:101px;background:#d0cde6;"></div>
<div class="a" style="left:550px;top:441px;width:2px;height:101px;background:#d0cde6;"></div>
<div class="a" style="left:882px;top:441px;width:2px;height:101px;background:#d0cde6;"></div>
<div class="a" style="left:1099px;top:441px;width:2px;height:101px;background:#d0cde6;"></div>
<div class="a" style="left:1419px;top:441px;width:2px;height:101px;background:#d0cde6;"></div>
<div class="a" style="left:1701px;top:441px;width:2px;height:101px;background:#d0cde6;"></div>
<div class="a" style="left:2079px;top:441px;width:2px;height:101px;background:#d0cde6;"></div>
<div class="a" style="left:2543px;top:441px;width:2px;height:101px;background:#d5d8dd;"></div>
<div class="a" style="left:90px;top:441px;width:2px;height:101px;background:#d5d8dd;"></div>
<div class="a" style="left:549px;top:479px;width:335px;height:64px;box-sizing:border-box;border:3px solid #865ef0;"></div>
<div class="a" style="left:1098px;top:479px;width:323px;height:64px;box-sizing:border-box;border:3px solid #865ef0;"></div>
<div class="a" style="left:1418px;top:479px;width:285px;height:64px;box-sizing:border-box;border:3px solid #865ef0;"></div>
<div class="a" style="left:90px;top:561px;width:2454px;height:44px;background:#46208e;"></div>
<div class="a t" style="left:136.3px;top:572.79px;font-size:22.34px;line-height:22.34px;color:#ffffff;font-weight:bold;font-style:normal;">REGISTRO DE VENDEDORES — Celdas AMARILLAS son editables</div>
<svg class="a" style="left:97px;top:572px;" width="21" height="23" viewBox="0 0 21 23"><defs><linearGradient id="cg" x1="0" y1="0" x2="0" y2="1"><stop offset="0" stop-color="#d6d6d8"/><stop offset="0.5" stop-color="#cbcbcb"/><stop offset="1" stop-color="#f4f4f4"/></linearGradient></defs><rect x="1" y="2.5" width="19" height="20" rx="1.3" fill="#a8834a"/><rect x="2.4" y="4" width="16.2" height="15.8" fill="url(#cg)"/><path d="M2.4 3.2H18.6V4.8H2.4Z" fill="#9c9a98"/><path d="M7 3.2L10.5 0.6L14 3.2Z" fill="#c4c4cc"/></svg>
<div class="a" style="left:91px;top:605px;width:2453px;height:45px;background:#855eec;"></div>
<div class="a" style="left:1420px;top:605px;width:282px;height:45px;background:#2a604a;"></div>
<div class="a t" style="left:-177.0px;width:600px;text-align:center;top:618.76px;font-size:18px;line-height:18px;color:#ffffff;font-weight:bold;font-style:normal;">#</div>
<div class="a t" style="left:53.0px;width:600px;text-align:center;top:618.76px;font-size:18px;line-height:18px;color:#ffffff;font-weight:bold;font-style:normal;">NOMBRE / ALIAS</div>
<div class="a t" style="left:417.0px;width:600px;text-align:center;top:618.76px;font-size:18px;line-height:18px;color:#ffffff;font-weight:bold;font-style:normal;">CONTACTO</div>
<div class="a t" style="left:691.5px;width:600px;text-align:center;top:618.76px;font-size:18px;line-height:18px;color:#ffffff;font-weight:bold;font-style:normal;">TASA COMISIÓN</div>
<div class="a t" style="left:960.0px;width:600px;text-align:center;top:618.76px;font-size:18px;line-height:18px;color:#ffffff;font-weight:bold;font-style:normal;">VENTAS MES ($)</div>
<div class="a t" style="left:1261.0px;width:600px;text-align:center;top:618.76px;font-size:18px;line-height:18px;color:#ffffff;font-weight:bold;font-style:normal;">COMISIÓN ($)</div>
<div class="a t" style="left:1591.0px;width:600px;text-align:center;top:618.76px;font-size:18px;line-height:18px;color:#ffffff;font-weight:bold;font-style:normal;">ESTADO</div>
<div class="a t" style="left:2079.0px;width:600px;text-align:center;top:618.76px;font-size:18px;line-height:18px;color:#ffffff;font-weight:bold;font-style:normal;">NOTAS</div>
<div class="a" style="left:91px;top:650px;width:64px;height:40px;background:#ede9fe;"></div>
<div class="a" style="left:155px;top:650px;width:945px;height:40px;background:#fefce8;"></div>
<div class="a" style="left:1100px;top:650px;width:320px;height:40px;background:#f5f3ff;"></div>
<div class="a" style="left:1420px;top:650px;width:282px;height:40px;background:#fcf2d0;"></div>
<div class="a" style="left:1702px;top:650px;width:378px;height:40px;background:#effcf5;"></div>
<div class="a" style="left:2080px;top:650px;width:464px;height:40px;background:#fefce8;"></div>
<div class="a" style="left:91px;top:690px;width:64px;height:39px;background:#ede9fe;"></div>
<div class="a" style="left:155px;top:690px;width:945px;height:39px;background:#fefce8;"></div>
<div class="a" style="left:1100px;top:690px;width:320px;height:39px;background:#ecfdf5;"></div>
<div class="a" style="left:1420px;top:690px;width:282px;height:39px;background:#fcf2d0;"></div>
<div class="a" style="left:1702px;top:690px;width:378px;height:39px;background:#effcf5;"></div>
<div class="a" style="left:2080px;top:690px;width:464px;height:39px;background:#fefce8;"></div>
<div class="a" style="left:91px;top:729px;width:64px;height:40px;background:#ede9fe;"></div>
<div class="a" style="left:155px;top:729px;width:945px;height:40px;background:#fefce8;"></div>
<div class="a" style="left:1100px;top:729px;width:320px;height:40px;background:#fef9c3;"></div>
<div class="a" style="left:1420px;top:729px;width:282px;height:40px;background:#fcf2d0;"></div>
<div class="a" style="left:1702px;top:729px;width:378px;height:40px;background:#effcf5;"></div>
<div class="a" style="left:2080px;top:729px;width:464px;height:40px;background:#fefce8;"></div>
<div class="a" style="left:91px;top:769px;width:64px;height:39px;background:#ede9fe;"></div>
<div class="a" style="left:155px;top:769px;width:945px;height:39px;background:#fefce8;"></div>
<div class="a" style="left:1100px;top:769px;width:320px;height:39px;background:#eff6ff;"></div>
<div class="a" style="left:1420px;top:769px;width:282px;height:39px;background:#fcf2d0;"></div>
<div class="a" style="left:1702px;top:769px;width:378px;height:39px;background:#effcf5;"></div>
<div class="a" style="left:2080px;top:769px;width:464px;height:39px;background:#fefce8;"></div>
<div class="a" style="left:91px;top:808px;width:64px;height:40px;background:#ede9fe;"></div>
<div class="a" style="left:155px;top:808px;width:945px;height:40px;background:#fefce8;"></div>
<div class="a" style="left:1100px;top:808px;width:320px;height:40px;background:#fef3c7;"></div>
<div class="a" style="left:1420px;top:808px;width:282px;height:40px;background:#fcf2d0;"></div>
<div class="a" style="left:1702px;top:808px;width:378px;height:40px;background:#effcf5;"></div>
<div class="a" style="left:2080px;top:808px;width:464px;height:40px;background:#fefce8;"></div>
<div class="a" style="left:91px;top:848px;width:64px;height:39px;background:#ede9fe;"></div>
<div class="a" style="left:155px;top:848px;width:945px;height:39px;background:#fefce8;"></div>
<div class="a" style="left:1100px;top:848px;width:320px;height:39px;background:#f0fdfa;"></div>
<div class="a" style="left:1420px;top:848px;width:282px;height:39px;background:#fcf2d0;"></div>
<div class="a" style="left:1702px;top:848px;width:378px;height:39px;background:#effcf5;"></div>
<div class="a" style="left:2080px;top:848px;width:464px;height:39px;background:#fefce8;"></div>
<div class="a" style="left:91px;top:887px;width:64px;height:40px;background:#ede9fe;"></div>
<div class="a" style="left:155px;top:887px;width:945px;height:40px;background:#fefce8;"></div>
<div class="a" style="left:1100px;top:887px;width:320px;height:40px;background:#f3f4f6;"></div>
<div class="a" style="left:1420px;top:887px;width:282px;height:40px;background:#fcf2d0;"></div>
<div class="a" style="left:1702px;top:887px;width:378px;height:40px;background:#f3f4f6;"></div>
<div class="a" style="left:2080px;top:887px;width:464px;height:40px;background:#fefce8;"></div>
<div class="a" style="left:91px;top:927px;width:64px;height:40px;background:#ede9fe;"></div>
<div class="a" style="left:155px;top:927px;width:945px;height:40px;background:#fefce8;"></div>
<div class="a" style="left:1100px;top:927px;width:320px;height:40px;background:#f3f4f6;"></div>
<div class="a" style="left:1420px;top:927px;width:282px;height:40px;background:#fcf2d0;"></div>
<div class="a" style="left:1702px;top:927px;width:378px;height:40px;background:#f3f4f6;"></div>
<div class="a" style="left:2080px;top:927px;width:464px;height:40px;background:#fefce8;"></div>
<div class="a t" style="left:93.0px;width:60px;text-align:center;top:660.27px;font-size:20px;line-height:20px;color:#4c1d95;font-weight:bold;font-style:normal;">1</div>
<div class="a t" style="left:160.6px;top:660.27px;font-size:20px;line-height:20px;color:#1e1b3a;font-weight:bold;font-style:normal;">Ana Distribuidora</div>
<div class="a t" style="left:557.0px;width:320px;text-align:center;top:661.26px;font-size:18px;line-height:18px;color:#6b7280;font-weight:normal;font-style:italic;">@ana.dist</div>
<div class="a t" style="left:891.5px;width:200px;text-align:center;top:659.28px;font-size:22px;line-height:22px;color:#4c1d95;font-weight:bold;font-style:normal;">15,0%</div>
<div class="a t" style="left:1110.0px;width:300px;text-align:center;top:659.28px;font-size:22px;line-height:22px;color:#1d5c42;font-weight:bold;font-style:normal;">$450,00</div>
<div class="a t" style="left:1421.0px;width:280px;text-align:center;top:658.28px;font-size:24px;line-height:24px;color:#8b4513;font-weight:bold;font-style:normal;">$67,50</div>
<div class="a t" style="left:1775.5px;width:200px;text-align:center;top:660.27px;font-size:20px;line-height:20px;color:#1d5c42;font-weight:bold;font-style:normal;">Activo</div>
<svg class="a" style="left:1913px;top:659px;" width="21" height="21" viewBox="0 0 21 21"><defs><linearGradient id="gk0" x1="0" y1="0" x2="0" y2="1"><stop offset="0" stop-color="#6fd14a"/><stop offset="1" stop-color="#45a82b"/></linearGradient></defs><rect x="0.5" y="0.5" width="20" height="20" rx="4.5" fill="url(#gk0)"/><path d="M4.5 10.5L8.5 15L16.5 5" fill="none" stroke="#fff" stroke-width="2.2"/></svg>
<div class="a t" style="left:2086.5px;top:661.26px;font-size:18px;line-height:18px;color:#6b7280;font-weight:normal;font-style:italic;">Revendedora postres zona norte</div>
<div class="a t" style="left:93.0px;width:60px;text-align:center;top:699.77px;font-size:20px;line-height:20px;color:#4c1d95;font-weight:bold;font-style:normal;">2</div>
<div class="a t" style="left:160.6px;top:699.77px;font-size:20px;line-height:20px;color:#1e1b3a;font-weight:bold;font-style:normal;">Karla Afiliada</div>
<div class="a t" style="left:557.0px;width:320px;text-align:center;top:700.76px;font-size:18px;line-height:18px;color:#6b7280;font-weight:normal;font-style:italic;">karla@gmail.com</div>
<div class="a t" style="left:891.5px;width:200px;text-align:center;top:698.78px;font-size:22px;line-height:22px;color:#4c1d95;font-weight:bold;font-style:normal;">10,0%</div>
<div class="a t" style="left:1110.0px;width:300px;text-align:center;top:698.78px;font-size:22px;line-height:22px;color:#1d5c42;font-weight:bold;font-style:normal;">$390,00</div>
<div class="a t" style="left:1421.0px;width:280px;text-align:center;top:697.78px;font-size:24px;line-height:24px;color:#8b4513;font-weight:bold;font-style:normal;">$39,00</div>
<div class="a t" style="left:1775.5px;width:200px;text-align:center;top:699.77px;font-size:20px;line-height:20px;color:#1d5c42;font-weight:bold;font-style:normal;">Activo</div>
<svg class="a" style="left:1913px;top:699px;" width="21" height="21" viewBox="0 0 21 21"><defs><linearGradient id="gk1" x1="0" y1="0" x2="0" y2="1"><stop offset="0" stop-color="#6fd14a"/><stop offset="1" stop-color="#45a82b"/></linearGradient></defs><rect x="0.5" y="0.5" width="20" height="20" rx="4.5" fill="url(#gk1)"/><path d="M4.5 10.5L8.5 15L16.5 5" fill="none" stroke="#fff" stroke-width="2.2"/></svg>
<div class="a t" style="left:2086.5px;top:700.76px;font-size:18px;line-height:18px;color:#6b7280;font-weight:normal;font-style:italic;">Afiliada Hotmart Finanzas</div>
<div class="a t" style="left:93.0px;width:60px;text-align:center;top:739.27px;font-size:20px;line-height:20px;color:#4c1d95;font-weight:bold;font-style:normal;">3</div>
<div class="a t" style="left:160.6px;top:739.27px;font-size:20px;line-height:20px;color:#1e1b3a;font-weight:bold;font-style:normal;">Mónica Revendedora</div>
<div class="a t" style="left:557.0px;width:320px;text-align:center;top:740.26px;font-size:18px;line-height:18px;color:#6b7280;font-weight:normal;font-style:italic;">@monica.rev</div>
<div class="a t" style="left:891.5px;width:200px;text-align:center;top:738.28px;font-size:22px;line-height:22px;color:#4c1d95;font-weight:bold;font-style:normal;">20,0%</div>
<div class="a t" style="left:1110.0px;width:300px;text-align:center;top:738.28px;font-size:22px;line-height:22px;color:#1d5c42;font-weight:bold;font-style:normal;">$235,00</div>
<div class="a t" style="left:1421.0px;width:280px;text-align:center;top:737.28px;font-size:24px;line-height:24px;color:#8b4513;font-weight:bold;font-style:normal;">$47,00</div>
<div class="a t" style="left:1775.5px;width:200px;text-align:center;top:739.27px;font-size:20px;line-height:20px;color:#1d5c42;font-weight:bold;font-style:normal;">Activo</div>
<svg class="a" style="left:1913px;top:738px;" width="21" height="21" viewBox="0 0 21 21"><defs><linearGradient id="gk2" x1="0" y1="0" x2="0" y2="1"><stop offset="0" stop-color="#6fd14a"/><stop offset="1" stop-color="#45a82b"/></linearGradient></defs><rect x="0.5" y="0.5" width="20" height="20" rx="4.5" fill="url(#gk2)"/><path d="M4.5 10.5L8.5 15L16.5 5" fill="none" stroke="#fff" stroke-width="2.2"/></svg>
<div class="a t" style="left:2086.5px;top:740.26px;font-size:18px;line-height:18px;color:#6b7280;font-weight:normal;font-style:italic;">Revendedora V&amp;A Essence</div>
<div class="a t" style="left:93.0px;width:60px;text-align:center;top:778.77px;font-size:20px;line-height:20px;color:#4c1d95;font-weight:bold;font-style:normal;">4</div>
<div class="a t" style="left:160.6px;top:778.77px;font-size:20px;line-height:20px;color:#1e1b3a;font-weight:bold;font-style:normal;">Pedro Referidos</div>
<div class="a t" style="left:557.0px;width:320px;text-align:center;top:779.76px;font-size:18px;line-height:18px;color:#6b7280;font-weight:normal;font-style:italic;">6799-0000</div>
<div class="a t" style="left:891.5px;width:200px;text-align:center;top:777.78px;font-size:22px;line-height:22px;color:#4c1d95;font-weight:bold;font-style:normal;">5,0%</div>
<div class="a t" style="left:1110.0px;width:300px;text-align:center;top:777.78px;font-size:22px;line-height:22px;color:#1d5c42;font-weight:bold;font-style:normal;">$125,00</div>
<div class="a t" style="left:1421.0px;width:280px;text-align:center;top:776.78px;font-size:24px;line-height:24px;color:#8b4513;font-weight:bold;font-style:normal;">$6,25</div>
<div class="a t" style="left:1775.5px;width:200px;text-align:center;top:778.77px;font-size:20px;line-height:20px;color:#1d5c42;font-weight:bold;font-style:normal;">Activo</div>
<svg class="a" style="left:1913px;top:778px;" width="21" height="21" viewBox="0 0 21 21"><defs><linearGradient id="gk3" x1="0" y1="0" x2="0" y2="1"><stop offset="0" stop-color="#6fd14a"/><stop offset="1" stop-color="#45a82b"/></linearGradient></defs><rect x="0.5" y="0.5" width="20" height="20" rx="4.5" fill="url(#gk3)"/><path d="M4.5 10.5L8.5 15L16.5 5" fill="none" stroke="#fff" stroke-width="2.2"/></svg>
<div class="a t" style="left:2086.5px;top:779.76px;font-size:18px;line-height:18px;color:#6b7280;font-weight:normal;font-style:italic;">Programa referidos general</div>
<div class="a t" style="left:93.0px;width:60px;text-align:center;top:818.27px;font-size:20px;line-height:20px;color:#4c1d95;font-weight:bold;font-style:normal;">5</div>
<div class="a t" style="left:160.6px;top:818.27px;font-size:20px;line-height:20px;color:#1e1b3a;font-weight:bold;font-style:normal;">Lucía Agente</div>
<div class="a t" style="left:557.0px;width:320px;text-align:center;top:819.26px;font-size:18px;line-height:18px;color:#6b7280;font-weight:normal;font-style:italic;">@lucia.agent</div>
<div class="a t" style="left:891.5px;width:200px;text-align:center;top:817.28px;font-size:22px;line-height:22px;color:#4c1d95;font-weight:bold;font-style:normal;">12,0%</div>
<div class="a t" style="left:1110.0px;width:300px;text-align:center;top:817.28px;font-size:22px;line-height:22px;color:#1d5c42;font-weight:bold;font-style:normal;">$840,00</div>
<div class="a t" style="left:1421.0px;width:280px;text-align:center;top:816.28px;font-size:24px;line-height:24px;color:#8b4513;font-weight:bold;font-style:normal;">$100,80</div>
<div class="a t" style="left:1775.5px;width:200px;text-align:center;top:818.27px;font-size:20px;line-height:20px;color:#1d5c42;font-weight:bold;font-style:normal;">Activo</div>
<svg class="a" style="left:1913px;top:817px;" width="21" height="21" viewBox="0 0 21 21"><defs><linearGradient id="gk4" x1="0" y1="0" x2="0" y2="1"><stop offset="0" stop-color="#6fd14a"/><stop offset="1" stop-color="#45a82b"/></linearGradient></defs><rect x="0.5" y="0.5" width="20" height="20" rx="4.5" fill="url(#gk4)"/><path d="M4.5 10.5L8.5 15L16.5 5" fill="none" stroke="#fff" stroke-width="2.2"/></svg>
<div class="a t" style="left:2086.5px;top:819.26px;font-size:18px;line-height:18px;color:#6b7280;font-weight:normal;font-style:italic;">Agente ventas corporativas</div>
<div class="a t" style="left:93.0px;width:60px;text-align:center;top:857.77px;font-size:20px;line-height:20px;color:#4c1d95;font-weight:bold;font-style:normal;">6</div>
<div class="a t" style="left:160.6px;top:857.77px;font-size:20px;line-height:20px;color:#1e1b3a;font-weight:bold;font-style:normal;">Equipo Hotmart</div>
<div class="a t" style="left:557.0px;width:320px;text-align:center;top:858.76px;font-size:18px;line-height:18px;color:#6b7280;font-weight:normal;font-style:italic;">Plataforma</div>
<div class="a t" style="left:891.5px;width:200px;text-align:center;top:856.78px;font-size:22px;line-height:22px;color:#4c1d95;font-weight:bold;font-style:normal;">10,0%</div>
<div class="a t" style="left:1110.0px;width:300px;text-align:center;top:856.78px;font-size:22px;line-height:22px;color:#1d5c42;font-weight:bold;font-style:normal;">$90,00</div>
<div class="a t" style="left:1421.0px;width:280px;text-align:center;top:855.78px;font-size:24px;line-height:24px;color:#8b4513;font-weight:bold;font-style:normal;">$9,00</div>
<div class="a t" style="left:1775.5px;width:200px;text-align:center;top:857.77px;font-size:20px;line-height:20px;color:#1d5c42;font-weight:bold;font-style:normal;">Activo</div>
<svg class="a" style="left:1913px;top:857px;" width="21" height="21" viewBox="0 0 21 21"><defs><linearGradient id="gk5" x1="0" y1="0" x2="0" y2="1"><stop offset="0" stop-color="#6fd14a"/><stop offset="1" stop-color="#45a82b"/></linearGradient></defs><rect x="0.5" y="0.5" width="20" height="20" rx="4.5" fill="url(#gk5)"/><path d="M4.5 10.5L8.5 15L16.5 5" fill="none" stroke="#fff" stroke-width="2.2"/></svg>
<div class="a t" style="left:2086.5px;top:858.76px;font-size:18px;line-height:18px;color:#6b7280;font-weight:normal;font-style:italic;">Comisión plataforma automática</div>
<div class="a t" style="left:93.0px;width:60px;text-align:center;top:897.27px;font-size:20px;line-height:20px;color:#4c1d95;font-weight:bold;font-style:normal;">7</div>
<div class="a t" style="left:160.6px;top:897.27px;font-size:20px;line-height:20px;color:#1e1b3a;font-weight:normal;font-style:normal;">Colaboradora 7</div>
<div class="a t" style="left:1110.0px;width:300px;text-align:center;top:896.28px;font-size:22px;line-height:22px;color:#1d5c42;font-weight:bold;font-style:normal;">$0,00</div>
<div class="a t" style="left:1421.0px;width:280px;text-align:center;top:895.28px;font-size:24px;line-height:24px;color:#8b4513;font-weight:bold;font-style:normal;">$0,00</div>
<div class="a t" style="left:1782.0px;width:200px;text-align:center;top:897.27px;font-size:20px;line-height:20px;color:#6b7280;font-weight:bold;font-style:normal;">Inactivo</div>
<div class="a" style="left:1927px;top:902.0px;width:4px;height:12.0px;background:#6b7280;border-radius:1px;"></div>
<div class="a" style="left:1934px;top:902.0px;width:4px;height:12.0px;background:#6b7280;border-radius:1px;"></div>
<div class="a t" style="left:93.0px;width:60px;text-align:center;top:937.27px;font-size:20px;line-height:20px;color:#4c1d95;font-weight:bold;font-style:normal;">8</div>
<div class="a t" style="left:160.6px;top:937.27px;font-size:20px;line-height:20px;color:#1e1b3a;font-weight:normal;font-style:normal;">Colaboradora 8</div>
<div class="a t" style="left:1110.0px;width:300px;text-align:center;top:936.28px;font-size:22px;line-height:22px;color:#1d5c42;font-weight:bold;font-style:normal;">$0,00</div>
<div class="a t" style="left:1421.0px;width:280px;text-align:center;top:935.28px;font-size:24px;line-height:24px;color:#8b4513;font-weight:bold;font-style:normal;">$0,00</div>
<div class="a t" style="left:1782.0px;width:200px;text-align:center;top:937.27px;font-size:20px;line-height:20px;color:#6b7280;font-weight:bold;font-style:normal;">Inactivo</div>
<div class="a" style="left:1927px;top:942.0px;width:4px;height:12.0px;background:#6b7280;border-radius:1px;"></div>
<div class="a" style="left:1934px;top:942.0px;width:4px;height:12.0px;background:#6b7280;border-radius:1px;"></div>
<div class="a" style="left:91px;top:967px;width:1329px;height:36px;background:#fefce8;"></div>
<div class="a" style="left:1420px;top:967px;width:282px;height:36px;background:#fcf3d0;"></div>
<div class="a" style="left:1702px;top:967px;width:842px;height:36px;background:#fefce8;"></div>
<div class="a t" style="left:1114.5px;width:300px;text-align:right;top:979.10px;font-size:20.2px;line-height:20.2px;color:#000000;font-weight:normal;font-style:normal;">$0,00</div>
<div class="a t" style="left:1396.8px;width:300px;text-align:right;top:979.10px;font-size:20.2px;line-height:20.2px;color:#000000;font-weight:normal;font-style:normal;">$0,00</div>
<div class="a" style="left:91px;top:1003px;width:1329px;height:37px;background:#fefce8;"></div>
<div class="a" style="left:1420px;top:1003px;width:282px;height:37px;background:#fcf3d0;"></div>
<div class="a" style="left:1702px;top:1003px;width:842px;height:37px;background:#fefce8;"></div>
<div class="a t" style="left:1114.5px;width:300px;text-align:right;top:1016.10px;font-size:20.2px;line-height:20.2px;color:#000000;font-weight:normal;font-style:normal;">$0,00</div>
<div class="a t" style="left:1396.8px;width:300px;text-align:right;top:1016.10px;font-size:20.2px;line-height:20.2px;color:#000000;font-weight:normal;font-style:normal;">$0,00</div>
<div class="a" style="left:91px;top:1040px;width:1329px;height:37px;background:#fefce8;"></div>
<div class="a" style="left:1420px;top:1040px;width:282px;height:37px;background:#fcf3d0;"></div>
<div class="a" style="left:1702px;top:1040px;width:842px;height:37px;background:#fefce8;"></div>
<div class="a t" style="left:1114.5px;width:300px;text-align:right;top:1053.10px;font-size:20.2px;line-height:20.2px;color:#000000;font-weight:normal;font-style:normal;">$0,00</div>
<div class="a t" style="left:1396.8px;width:300px;text-align:right;top:1053.10px;font-size:20.2px;line-height:20.2px;color:#000000;font-weight:normal;font-style:normal;">$0,00</div>
<div class="a" style="left:91px;top:1077px;width:1329px;height:36px;background:#fefce8;"></div>
<div class="a" style="left:1420px;top:1077px;width:282px;height:36px;background:#fcf3d0;"></div>
<div class="a" style="left:1702px;top:1077px;width:842px;height:36px;background:#fefce8;"></div>
<div class="a t" style="left:1114.5px;width:300px;text-align:right;top:1089.10px;font-size:20.2px;line-height:20.2px;color:#000000;font-weight:normal;font-style:normal;">$0,00</div>
<div class="a t" style="left:1396.8px;width:300px;text-align:right;top:1089.10px;font-size:20.2px;line-height:20.2px;color:#000000;font-weight:normal;font-style:normal;">$0,00</div>
<div class="a" style="left:91px;top:1113px;width:1329px;height:37px;background:#fefce8;"></div>
<div class="a" style="left:1420px;top:1113px;width:282px;height:37px;background:#fcf3d0;"></div>
<div class="a" style="left:1702px;top:1113px;width:842px;height:37px;background:#fefce8;"></div>
<div class="a t" style="left:1114.5px;width:300px;text-align:right;top:1126.10px;font-size:20.2px;line-height:20.2px;color:#000000;font-weight:normal;font-style:normal;">$0,00</div>
<div class="a t" style="left:1396.8px;width:300px;text-align:right;top:1126.10px;font-size:20.2px;line-height:20.2px;color:#000000;font-weight:normal;font-style:normal;">$0,00</div>
<div class="a" style="left:91px;top:1150px;width:1329px;height:36px;background:#fefce8;"></div>
<div class="a" style="left:1420px;top:1150px;width:282px;height:36px;background:#fcf3d0;"></div>
<div class="a" style="left:1702px;top:1150px;width:842px;height:36px;background:#fefce8;"></div>
<div class="a t" style="left:1114.5px;width:300px;text-align:right;top:1162.10px;font-size:20.2px;line-height:20.2px;color:#000000;font-weight:normal;font-style:normal;">$0,00</div>
<div class="a t" style="left:1396.8px;width:300px;text-align:right;top:1162.10px;font-size:20.2px;line-height:20.2px;color:#000000;font-weight:normal;font-style:normal;">$0,00</div>
<div class="a" style="left:91px;top:1186px;width:1329px;height:37px;background:#fefce8;"></div>
<div class="a" style="left:1420px;top:1186px;width:282px;height:37px;background:#fcf3d0;"></div>
<div class="a" style="left:1702px;top:1186px;width:842px;height:37px;background:#fefce8;"></div>
<div class="a t" style="left:1114.5px;width:300px;text-align:right;top:1199.10px;font-size:20.2px;line-height:20.2px;color:#000000;font-weight:normal;font-style:normal;">$0,00</div>
<div class="a t" style="left:1396.8px;width:300px;text-align:right;top:1199.10px;font-size:20.2px;line-height:20.2px;color:#000000;font-weight:normal;font-style:normal;">$0,00</div>
<div class="a" style="left:91px;top:649px;width:2453px;height:2px;background:#d5d8dd;"></div>
<div class="a" style="left:91px;top:689px;width:2453px;height:2px;background:#d5d8dd;"></div>
<div class="a" style="left:91px;top:728px;width:2453px;height:2px;background:#d5d8dd;"></div>
<div class="a" style="left:91px;top:768px;width:2453px;height:2px;background:#d5d8dd;"></div>
<div class="a" style="left:91px;top:807px;width:2453px;height:2px;background:#d5d8dd;"></div>
<div class="a" style="left:91px;top:847px;width:2453px;height:2px;background:#d5d8dd;"></div>
<div class="a" style="left:91px;top:886px;width:2453px;height:2px;background:#d5d8dd;"></div>
<div class="a" style="left:91px;top:926px;width:2453px;height:2px;background:#d5d8dd;"></div>
<div class="a" style="left:91px;top:966px;width:2453px;height:2px;background:#d5d8dd;"></div>
<div class="a" style="left:91px;top:1002px;width:2453px;height:2px;background:#d5d8dd;"></div>
<div class="a" style="left:91px;top:1039px;width:2453px;height:2px;background:#d5d8dd;"></div>
<div class="a" style="left:91px;top:1076px;width:2453px;height:2px;background:#d5d8dd;"></div>
<div class="a" style="left:91px;top:1112px;width:2453px;height:2px;background:#d5d8dd;"></div>
<div class="a" style="left:91px;top:1149px;width:2453px;height:2px;background:#d5d8dd;"></div>
<div class="a" style="left:91px;top:1185px;width:2453px;height:2px;background:#d5d8dd;"></div>
<div class="a" style="left:91px;top:1222px;width:2453px;height:2px;background:#d5d8dd;"></div>
<div class="a" style="left:91px;top:605px;width:2453px;height:2px;background:#d5d8dd;"></div>
<div class="a" style="left:90px;top:650px;width:2px;height:573px;background:#d5d8dd;"></div>
<div class="a" style="left:90px;top:606px;width:2px;height:44px;background:#d0cde6;"></div>
<div class="a" style="left:154px;top:650px;width:2px;height:573px;background:#d5d8dd;"></div>
<div class="a" style="left:154px;top:606px;width:2px;height:44px;background:#d0cde6;"></div>
<div class="a" style="left:550px;top:650px;width:2px;height:573px;background:#d5d8dd;"></div>
<div class="a" style="left:550px;top:606px;width:2px;height:44px;background:#d0cde6;"></div>
<div class="a" style="left:882px;top:650px;width:2px;height:573px;background:#d5d8dd;"></div>
<div class="a" style="left:882px;top:606px;width:2px;height:44px;background:#d0cde6;"></div>
<div class="a" style="left:1099px;top:650px;width:2px;height:573px;background:#d5d8dd;"></div>
<div class="a" style="left:1099px;top:606px;width:2px;height:44px;background:#d0cde6;"></div>
<div class="a" style="left:1419px;top:650px;width:2px;height:573px;background:#d5d8dd;"></div>
<div class="a" style="left:1419px;top:606px;width:2px;height:44px;background:#d0cde6;"></div>
<div class="a" style="left:1701px;top:650px;width:2px;height:573px;background:#d5d8dd;"></div>
<div class="a" style="left:1701px;top:606px;width:2px;height:44px;background:#d0cde6;"></div>
<div class="a" style="left:2079px;top:650px;width:2px;height:573px;background:#d5d8dd;"></div>
<div class="a" style="left:2079px;top:606px;width:2px;height:44px;background:#d0cde6;"></div>
<div class="a" style="left:2543px;top:606px;width:2px;height:617px;background:#d5d8dd;"></div>
<div class="a" style="left:1418px;top:648px;width:285px;height:43px;box-sizing:border-box;border:3px solid #865ef0;"></div>
<div class="a" style="left:1418px;top:688px;width:285px;height:42px;box-sizing:border-box;border:3px solid #865ef0;"></div>
<div class="a" style="left:1418px;top:727px;width:285px;height:43px;box-sizing:border-box;border:3px solid #865ef0;"></div>
<div class="a" style="left:1418px;top:767px;width:285px;height:42px;box-sizing:border-box;border:3px solid #865ef0;"></div>
<div class="a" style="left:1418px;top:806px;width:285px;height:43px;box-sizing:border-box;border:3px solid #865ef0;"></div>
<div class="a" style="left:1418px;top:846px;width:285px;height:42px;box-sizing:border-box;border:3px solid #865ef0;"></div>
<div class="a" style="left:1418px;top:885px;width:285px;height:43px;box-sizing:border-box;border:3px solid #865ef0;"></div>
<div class="a" style="left:1418px;top:925px;width:285px;height:43px;box-sizing:border-box;border:3px solid #865ef0;"></div>
<div class="a" style="left:90px;top:1243px;width:2454px;height:32px;background:#46208e;"></div>
<div class="a t" style="left:795.0px;width:1200px;text-align:center;top:1250.24px;font-size:16.25px;line-height:16.25px;color:#ffffff;font-weight:normal;font-style:italic;">© Finanzas en Orden | Avanza con Propósitoo | avanzaconpropositoo.com | Plantilla 28 de 50</div>
<div class="a" style="left:2545px;top:248px;width:15px;height:1138px;background:#ffffff;"></div>
<div class="a" style="left:2546px;top:250px;width:14px;height:39px;background:#dadada;border-radius:7px;"></div>
<div class="a" style="left:2545px;top:1337px;width:15px;height:49px;background:#f8f8f8;"></div>
<div class="a" style="left:2545px;top:1337px;width:15px;height:1px;background:#c7c7c7;"></div>
<div class="a" style="left:2545px;top:1361px;width:15px;height:1px;background:#c7c7c7;"></div>
<svg class="a" style="left:2549px;top:1345px;" width="9" height="6" viewBox="0 0 9 6"><path d="M0 5.5H8.5L4.25 0.5Z" fill="#9a9a9a"/></svg>
<svg class="a" style="left:2549px;top:1371px;" width="9" height="6" viewBox="0 0 9 6"><path d="M0 0.5H8.5L4.25 5.5Z" fill="#9a9a9a"/></svg>
<div class="a" style="left:0px;top:1386px;width:2560px;height:20px;background:#ffffff;"></div>
<div class="a" style="left:0px;top:1386px;width:2560px;height:1px;background:#c7c7c7;"></div>
<div class="a" style="left:0px;top:1387px;width:70px;height:18px;background:#f8f9fa;"></div>
<div class="a" style="left:70px;top:1387px;width:1px;height:18px;background:#c7c7c7;"></div>
<div class="a" style="left:73px;top:1389px;width:1453px;height:14px;background:#dadada;border-radius:7px;"></div>
<div class="a" style="left:2497px;top:1387px;width:48px;height:18px;background:#f8f8f8;"></div>
<div class="a" style="left:2496px;top:1387px;width:1px;height:17px;background:#c7c7c7;"></div>
<div class="a" style="left:2521px;top:1387px;width:1px;height:17px;background:#c7c7c7;"></div>
<div class="a" style="left:2544px;top:1384px;width:2px;height:20px;background:#c0c0c0;"></div>
<svg class="a" style="left:2505px;top:1391px;" width="6" height="9" viewBox="0 0 6 9"><path d="M5.5 0V8.5L0.5 4.25Z" fill="#9a9a9a"/></svg>
<svg class="a" style="left:2530px;top:1391px;" width="6" height="9" viewBox="0 0 6 9"><path d="M0.5 0V8.5L5.5 4.25Z" fill="#9a9a9a"/></svg>
<div class="a" style="left:0px;top:1406px;width:2560px;height:1px;background:#c7c7c7;"></div>
<div class="a" style="left:0px;top:1407px;width:2560px;height:55px;background:#f9fbfd;"></div>
<svg class="a" style="left:84px;top:1426px;" width="19" height="19" viewBox="0 0 19 19"><path d="M9.5 0.5V18.5M0.5 9.5H18.5" stroke="#444746" stroke-width="2.6"/></svg>
<svg class="a" style="left:143px;top:1427px;" width="24" height="17" viewBox="0 0 24 17"><path d="M1 2H23M1 8.5H23M1 15H23" stroke="#444746" stroke-width="2.6"/></svg>
<div class="a" style="left:443px;top:1407px;width:222px;height:55px;background:#e1e6ee;"></div>
<div class="a" style="left:665px;top:1407px;width:165px;height:55px;background:#ececec;"></div>
<svg class="a" style="left:224.5px;top:1425px;" width="19" height="21" viewBox="0 0 19 21"><rect x="0.8" y="2" width="17.4" height="18.5" rx="1.5" fill="#b07a3b"/><rect x="2.3" y="3.5" width="14.4" height="15.5" fill="#e3e3e3"/><path d="M6 0.8H13V4.5H6Z" fill="#9a9a9a"/></svg>
<div class="a t" style="left:252px;top:1425.38px;font-size:22px;line-height:22px;color:#444746;font-weight:normal;font-style:normal;letter-spacing:0.95px;-webkit-text-stroke:0.25px #444746;">Instrucciones</div>
<svg class="a" style="left:412px;top:1431px;" width="13" height="8" viewBox="0 0 13 8"><path d="M0.5 0.5H12.5L6.5 7.5Z" fill="#444746"/></svg>
<svg class="a" style="left:461px;top:1426px;" width="22" height="19" viewBox="0 0 22 19"><circle cx="7" cy="5" r="4" fill="#5b7ea0"/><path d="M0.5 18C0.5 12 3 9.5 7 9.5C11 9.5 13.5 12 13.5 18Z" fill="#5b7ea0"/><circle cx="15" cy="5" r="4" fill="#6e8fb0"/><path d="M8.5 18C8.5 12 11 9.5 15 9.5C19 9.5 21.5 12 21.5 18Z" fill="#6e8fb0"/></svg>
<div class="a t" style="left:488.5px;top:1425.38px;font-size:22px;line-height:22px;color:#0b57d0;font-weight:normal;font-style:normal;letter-spacing:1.0px;-webkit-text-stroke:0.7px #0b57d0;">Vendedores</div>
<svg class="a" style="left:634px;top:1431px;" width="13" height="8" viewBox="0 0 13 8"><path d="M0.5 0.5H12.5L6.5 7.5Z" fill="#0b57d0"/></svg>
<svg class="a" style="left:685px;top:1425px;" width="21" height="22" viewBox="0 0 21 22"><rect x="0.8" y="0.8" width="17" height="20" fill="#f1f1f1" stroke="#dcdcdc" stroke-width="0.8"/><path d="M2.5 3.5H16M2.5 6H15M2.5 8.5H13M2.5 11H9M2.5 13.5H7M2.5 16H6" stroke="#9a9a9a" stroke-width="0.9"/><path d="M6 18.5L16.5 7L20 10.2L9.5 21.5L5.2 21.2Z" fill="#f2c94c"/><path d="M16.5 7L18 5.3L21.2 8.5L20 10.2Z" fill="#e58b8b"/><path d="M5.2 21.2L6 18.5L9.5 21.5Z" fill="#444"/></svg>
<div class="a t" style="left:711.5px;top:1425.38px;font-size:22px;line-height:22px;color:#444746;font-weight:normal;font-style:normal;letter-spacing:0.3px;-webkit-text-stroke:0.25px #444746;">Ventas</div>
<svg class="a" style="left:799px;top:1431px;" width="13" height="8" viewBox="0 0 13 8"><path d="M0.5 0.5H12.5L6.5 7.5Z" fill="#444746"/></svg>
<svg class="a" style="left:851px;top:1425px;" width="18" height="21" viewBox="0 0 18 21"><path d="M4.5 1.5L7 0.5H11L13.5 1.5L11.5 5.5H6.5Z" fill="#c9962e"/><path d="M6.5 5.5H11.5C15.5 8 17.5 12.5 17.5 15.5C17.5 19.5 14 20.5 9 20.5C4 20.5 0.5 19.5 0.5 15.5C0.5 12.5 2.5 8 6.5 5.5Z" fill="#d9a93a"/><text x="9" y="17.3" font-size="10.5" font-family="Liberation Sans" font-weight="bold" fill="#4a3a10" text-anchor="middle">$</text></svg>
<div class="a t" style="left:878px;top:1425.38px;font-size:22px;line-height:22px;color:#444746;font-weight:normal;font-style:normal;letter-spacing:0.41px;-webkit-text-stroke:0.25px #444746;">Comisiones</div>
<svg class="a" style="left:1015px;top:1431px;" width="13" height="8" viewBox="0 0 13 8"><path d="M0.5 0.5H12.5L6.5 7.5Z" fill="#444746"/></svg>
<svg class="a" style="left:1067px;top:1425px;" width="18" height="21" viewBox="0 0 18 21"><rect x="0" y="0" width="18" height="21" fill="#e6ebf1"/><rect x="1" y="7" width="3.6" height="14" fill="#45b83a"/><rect x="7.3" y="11" width="3.6" height="10" fill="#c9271e"/><rect x="13.6" y="2.5" width="3.6" height="18.5" fill="#2459c4"/></svg>
<div class="a t" style="left:1094.8px;top:1425.38px;font-size:22px;line-height:22px;color:#444746;font-weight:normal;font-style:normal;letter-spacing:0.2px;-webkit-text-stroke:0.25px #444746;">Ranking</div>
<svg class="a" style="left:1195px;top:1431px;" width="13" height="8" viewBox="0 0 13 8"><path d="M0.5 0.5H12.5L6.5 7.5Z" fill="#444746"/></svg>
<svg class="a" style="left:2512px;top:1428px;" width="13" height="20" viewBox="0 0 13 20"><path d="M10.5 2.5L3.5 9.5L10.5 16.5" fill="none" stroke="#5f6368" stroke-width="2.6"/></svg>
</body></html>
